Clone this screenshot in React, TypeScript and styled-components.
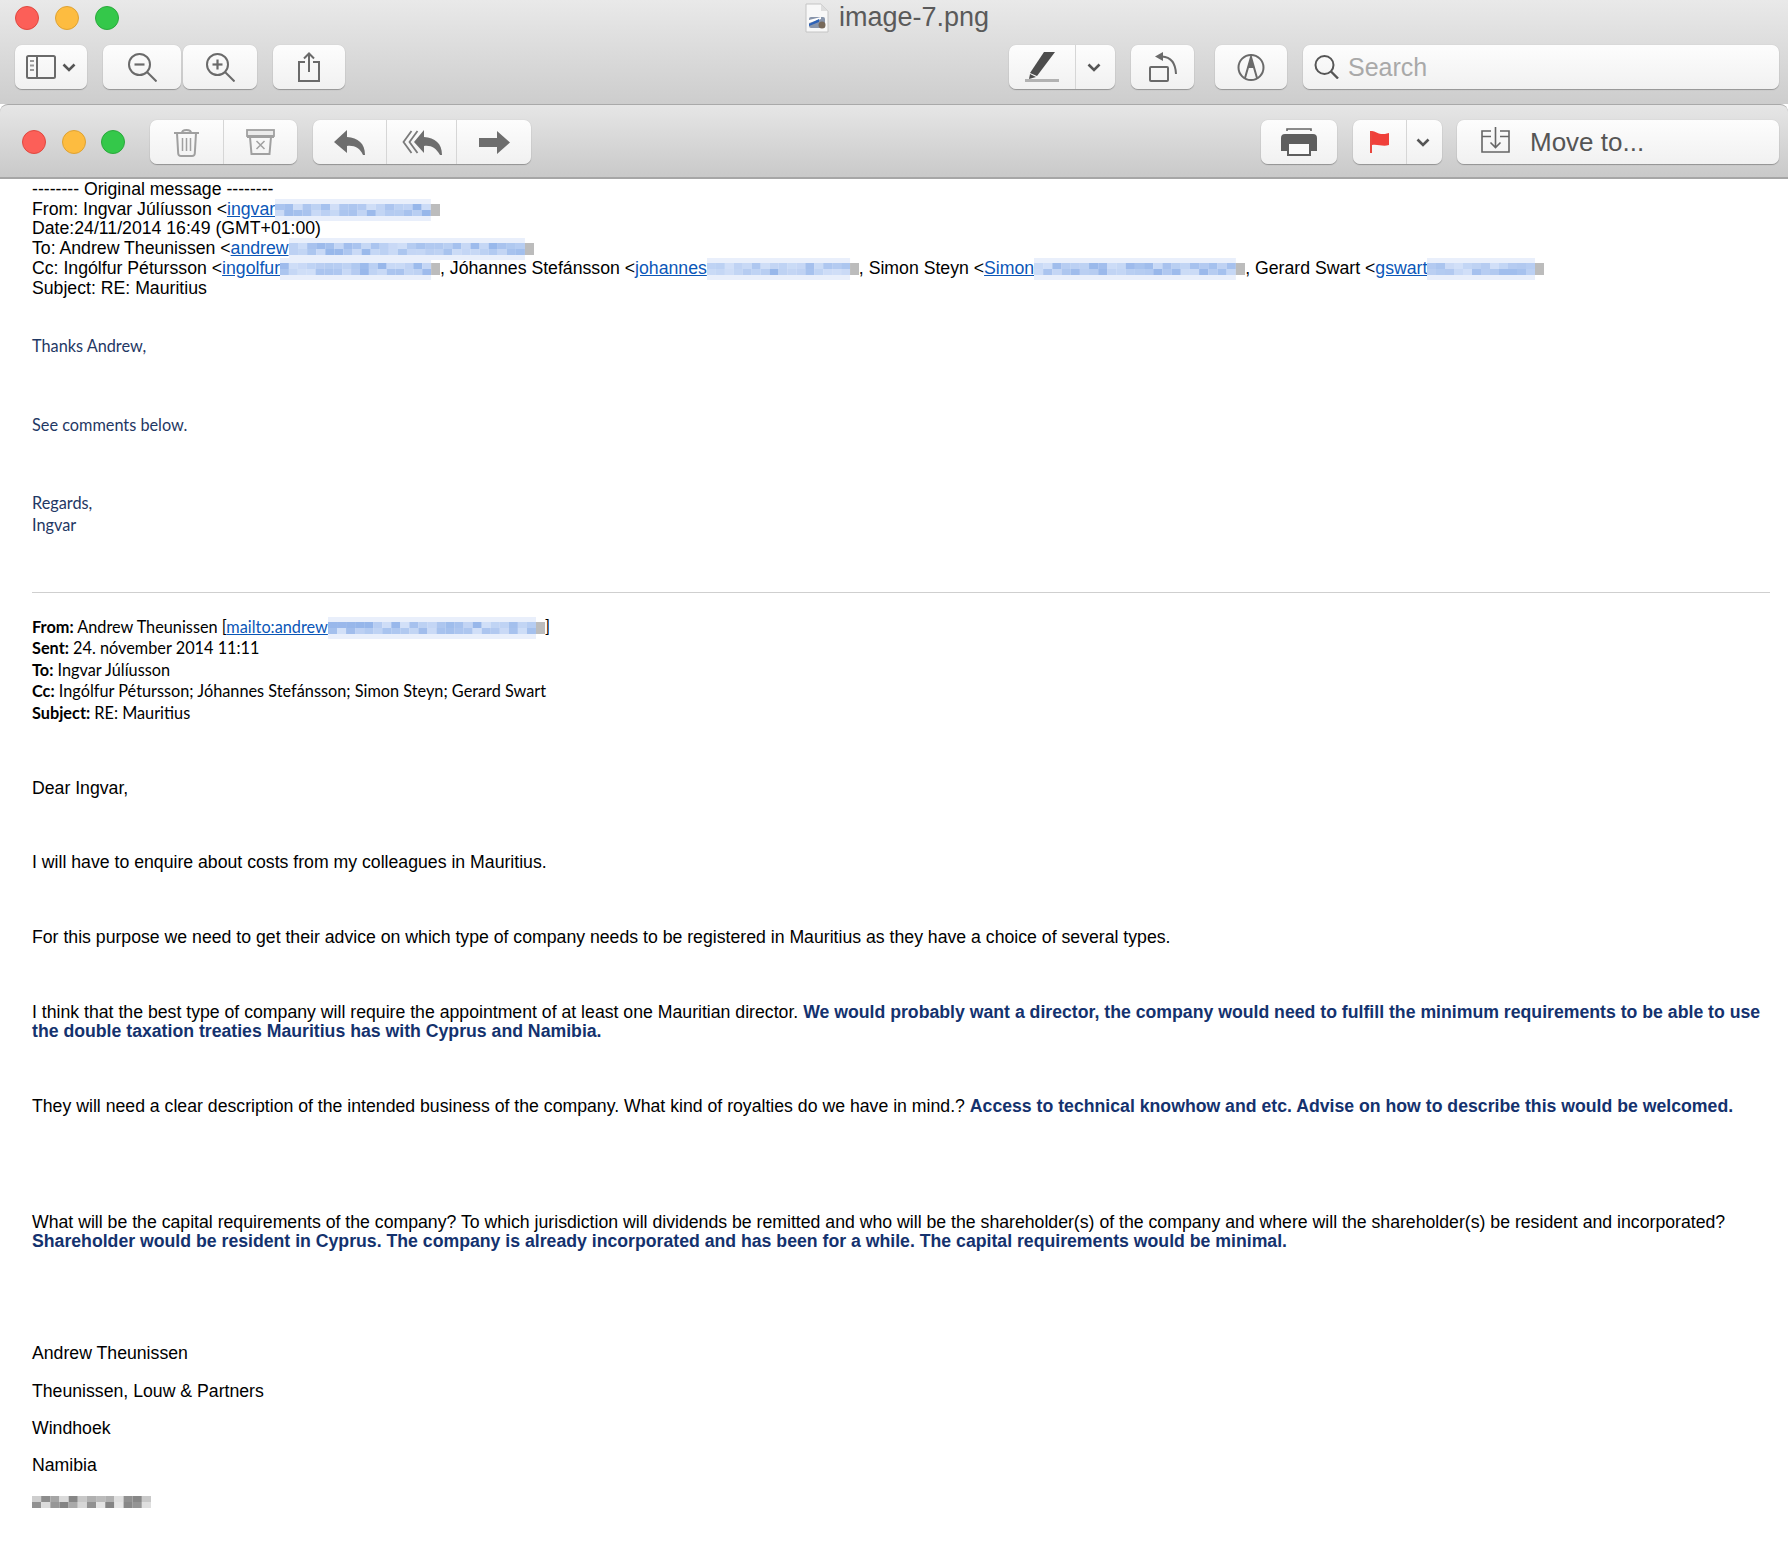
import React from 'react';
import styled, { createGlobalStyle } from 'styled-components';

const GlobalStyle = createGlobalStyle`
  html, body {
    margin: 0;
    padding: 0;
    background: #fff;
  }
`;

const Page = styled.div`
  width: 1788px;
  min-height: 1566px;
  background: #fff;
  overflow: hidden;
`;

// Preview window chrome
const PreviewBar = styled.header`
  height: 104px;
  box-sizing: border-box;
  background: linear-gradient(#e9e9e9, #cdcdcd);
  padding: 2px 9px 0 15px;
`;

const TitleRow = styled.div`
  display: grid;
  grid-template-columns: 1fr auto 1fr;
  align-items: center;
  height: 30px;
`;

const Lights = styled.div<{ $gap: number }>`
  display: flex;
  gap: ${p => p.$gap}px;
`;

const Light = styled.span<{ $color: string; $edge: string }>`
  width: 24px;
  height: 24px;
  border-radius: 50%;
  box-sizing: border-box;
  background: ${p => p.$color};
  border: 1px solid ${p => p.$edge};
`;

const Title = styled.div`
  display: flex;
  align-items: center;
  gap: 10px;
  font: 27px "Liberation Sans", Arial, sans-serif;
  color: #5a5a5a;
`;

const ToolRow = styled.div`
  display: flex;
  align-items: flex-start;
  margin-top: 13px;
`;

const Spacer = styled.div`
  flex: 1;
`;

const Btn = styled.div<{ $w: number; $ml?: number }>`
  width: ${p => p.$w}px;
  height: 44px;
  margin-left: ${p => p.$ml ?? 0}px;
  flex: none;
  box-sizing: border-box;
  display: flex;
  align-items: center;
  justify-content: center;
  gap: 6px;
  border-radius: 7px;
  background: linear-gradient(#fdfdfd, #f1f1f1);
  box-shadow: 0 1px 1px rgba(0, 0, 0, 0.28), 0 0 1px rgba(0, 0, 0, 0.18);
`;

const Group = styled(Btn)`
  justify-content: flex-start;
  gap: 0;
`;

const Seg = styled.div<{ $w: number; $line?: boolean }>`
  width: ${p => p.$w}px;
  height: 100%;
  box-sizing: border-box;
  display: flex;
  align-items: center;
  justify-content: center;
  border-right: ${p => (p.$line ? '1px solid #d6d6d6' : 'none')};
`;

const ArrowSeg = styled(Seg)`
  padding-right: 3px;
`;

const SearchBox = styled(Btn)`
  justify-content: flex-start;
  padding-left: 11px;
  gap: 9px;
  font: 25px "Liberation Sans", Arial, sans-serif;
  color: #a9a9a9;
`;

const MoveBox = styled(Btn)`
  justify-content: flex-start;
  padding-left: 24px;
  gap: 20px;
  font: 26px "Liberation Sans", Arial, sans-serif;
  color: #555;

  svg {
    margin-top: -4px;
  }
`;

// Mail window chrome
const MailBar = styled.div`
  height: 75px;
  box-sizing: border-box;
  display: flex;
  align-items: flex-start;
  padding: 15px 9px 0 22px;
  background: linear-gradient(#e6e6e6, #c9c9c9);
  border-top: 1px solid #a9a9a9;
  border-bottom: 2px solid #a6a6a6;
  border-radius: 8px 8px 0 0;
`;

const MailLights = styled(Lights)`
  height: 44px;
  align-items: center;
  width: 128px;
`;

// Message body
const Message = styled.main`
  padding: 1px 18px 0 32px;
  color: #000;
`;

const Arial = styled.div<{ $mt?: number }>`
  font: 17.68px/19.7px "Liberation Sans", Arial, sans-serif;
  margin-top: ${p => p.$mt ?? 0}px;
  white-space: nowrap;
`;

const Calibri = styled.div<{ $mt?: number; $navy?: boolean }>`
  font: 16.3px/21.6px Lato, "Open Sans", sans-serif;
  margin-top: ${p => p.$mt ?? 0}px;
  color: ${p => (p.$navy ? '#1f3864' : '#000')};
  white-space: nowrap;
`;

const Link = styled.span`
  color: #0b57b8;
  text-decoration: underline;
`;

const Reply = styled.strong`
  color: #14326e;
`;

const Rule = styled.hr`
  border: none;
  border-top: 1px solid #cfcfcf;
  margin: 56px 0 0;
`;

const Pixels = styled.svg<{ $w: number }>`
  display: inline-block;
  width: ${p => p.$w}px;
  height: 22px;
  margin: -4px 0;
  vertical-align: middle;
`;

const CELL = 9;

// pixelated block over the hidden part of an address
const Redact: React.FC<{ w: number; gray?: boolean; seed: number }> = ({ w, gray, seed }) => {
  const cols = Math.round(w / CELL);
  const cells: React.ReactNode[] = [];
  let s = seed;
  for (let y = 0; y < 2; y++) {
    for (let x = 0; x < cols; x++) {
      s = (s * 9301 + 49297) % 233280;
      const v = s / 233280;
      let fill = `rgb(${150 + v * 60},${182 + v * 42},${234 + v * 14})`;
      if (gray) fill = `rgb(${130 + v * 100},${130 + v * 100},${130 + v * 100})`;
      else if (x === cols - 1) fill = '#bcbcbc';
      cells.push(<rect key={`${x}-${y}`} x={x * CELL} y={5 + y * 6} width={CELL} height={6} fill={fill} />);
    }
  }
  return (
    <Pixels $w={w} viewBox={`0 0 ${cols * CELL} 22`} preserveAspectRatio="none">
      {!gray && <rect x={0} y={0} width={(cols - 1) * CELL} height={22} fill="#e9effb" />}
      {cells}
    </Pixels>
  );
};

const Ic = { fill: 'none', stroke: '#6a6a6a', strokeWidth: 2 };

const Chevron = () => (
  <svg width="14" height="9" viewBox="0 0 14 9" fill="none" stroke="#555" strokeWidth="2.6">
    <path d="M1.5 1.5L7 7l5.5-5.5" />
  </svg>
);

const SidebarIcon = () => (
  <svg width="30" height="24" viewBox="0 0 30 24" {...Ic}>
    <rect x="1" y="1" width="28" height="22" rx="1.5" />
    <path d="M11 1v22" />
    <path d="M4 6h4M4 10.5h4M4 15h4" stroke="#999" />
  </svg>
);

const ZoomIcon: React.FC<{ plus?: boolean }> = ({ plus }) => (
  <svg width="29" height="29" viewBox="0 0 29 29" {...Ic}>
    <circle cx="11.5" cy="11.5" r="10.5" />
    <path d="M19 19l9.5 9.5" />
    <path d="M6.5 11.5h10" strokeWidth="2.2" />
    {plus && <path d="M11.5 6.5v10" strokeWidth="2.2" />}
  </svg>
);

const ShareIcon = () => (
  <svg width="22" height="30" viewBox="0 0 22 30" {...Ic}>
    <path d="M7 10H1v19h20V10h-6" />
    <path d="M11 20V1.5M6 6.5l5-5 5 5" />
  </svg>
);

const PenIcon = () => (
  <svg width="34" height="30" viewBox="0 0 34 30">
    <path d="M19 0h11L12 24l-7-3z" fill="#4d4d4d" />
    <path d="M5 22l6 3-7 2z" fill="#4d4d4d" />
    <rect x="0" y="27" width="34" height="3" fill="#b2b2b2" />
  </svg>
);

const RotateIcon = () => (
  <svg width="28" height="30" viewBox="0 0 28 30" fill="none" stroke="#6a6a6a" strokeWidth="2">
    <rect x="1" y="15" width="18" height="14" rx="1" />
    <path d="M13 4.5C22 5 26.5 11 27 22" />
    <path d="M14 0L6 4.5 14 9z" fill="#6a6a6a" stroke="none" />
  </svg>
);

const MarkupIcon = () => (
  <svg width="28" height="27" viewBox="0 0 28 27" fill="none" stroke="#6a6a6a" strokeWidth="2">
    <circle cx="14" cy="13.5" r="12.5" />
    <path d="M8 24l6-21 6 21" />
    <path d="M14 3l3.5 11h-7z" fill="#6a6a6a" stroke="none" />
  </svg>
);

const SearchIcon = () => (
  <svg width="25" height="24" viewBox="0 0 25 24" fill="none" stroke="#555" strokeWidth="2">
    <circle cx="10.5" cy="10" r="9" />
    <path d="M17 16.5l7 7" strokeWidth="2.4" />
  </svg>
);

const TrashIcon = () => (
  <svg width="25" height="29" viewBox="0 0 25 29" fill="none" stroke="#a0a0a0" strokeWidth="2">
    <path d="M0 5h25M8 5c0-4 9-4 9 0" />
    <path d="M3 5l1.2 20.5q.2 2.5 2.8 2.5h11q2.6 0 2.8-2.5L22 5" />
    <path d="M8.5 10v13M12.5 10v13M16.5 10v13" strokeWidth="1.5" />
  </svg>
);

const ArchiveIcon = () => (
  <svg width="29" height="26" viewBox="0 0 29 26" fill="none" stroke="#a0a0a0" strokeWidth="2">
    <rect x="1" y="1" width="27" height="6" fill="#ebebeb" strokeWidth="1.8" />
    <path d="M1 7.5h27" strokeWidth="3" />
    <path d="M4 8l1.5 17h18L25 8" />
    <path d="M10.5 12l8 8M18.5 12l-8 8" strokeWidth="1.5" />
  </svg>
);

const ReplyIcon = () => (
  <svg width="31" height="25" viewBox="0 0 31 25" fill="#6e6e6e">
    <path d="M13 0L0 12l13 11v-7c7-1 13 2 16 9h2c0-12-7-17-18-18z" />
  </svg>
);

const ReplyAllIcon = () => (
  <svg width="40" height="25" viewBox="0 0 40 25" fill="none">
    <path d="M9.5 1L1.5 12l8 11M15.5 1L7.5 12l8 11" stroke="#7a7a7a" strokeWidth="1.8" />
    <path d="M22 0L12 12l10 11v-7c7-1 12 2 16 9h2c0-12-7-17-18-18z" fill="#6e6e6e" />
  </svg>
);

const ForwardIcon = () => (
  <svg width="31" height="23" viewBox="0 0 31 23" fill="#6e6e6e">
    <path d="M0 7h18V0l13 11.5L18 23v-7H0z" />
  </svg>
);

const PrintIcon = () => (
  <svg width="36" height="28" viewBox="0 0 36 28">
    <path d="M6 3V1h24v2" fill="none" stroke="#666" strokeWidth="1.6" />
    <path d="M4 6h28a4 4 0 0 1 4 4v13h-6v-8H6v8H0V10a4 4 0 0 1 4-4z" fill="#5e5e5e" />
    <rect x="7" y="15" width="22" height="12" fill="#fafafa" stroke="#5e5e5e" strokeWidth="2" />
  </svg>
);

const FlagIcon = () => (
  <svg width="19" height="22" viewBox="0 0 19 22">
    <path d="M1 0v22" stroke="#e8342a" strokeWidth="1.8" />
    <path d="M2 0c3 0 6 3 9 3 3 0 5 0 8-1v12c-6 2-11-1-17 0z" fill="#f0403a" />
  </svg>
);

const MoveIcon = () => (
  <svg width="29" height="26" viewBox="0 0 29 26" fill="none" stroke="#666" strokeWidth="1.6">
    <path d="M10 4H1v21h27V4h-9" />
    <path d="M1 9.5h9M19 9.5h9" strokeWidth="1.3" />
    <path d="M14.5 0v20M9.5 15.5l5 5 5-5" />
  </svg>
);

const FileIcon = () => (
  <svg width="24" height="30" viewBox="0 0 24 30">
    <path d="M1 1h15l7 7v21H1z" fill="#f8f8f8" stroke="#c4c4c4" />
    <path d="M16 1v7h7z" fill="#dedede" />
    <rect x="4" y="14" width="16" height="11" rx="2" fill="#8794aa" />
    <path d="M4 17l12-3v2L4 20z" fill="#fff" />
    <path d="M4 21l10-5v3l-10 4z" fill="#2c62b8" />
    <circle cx="17" cy="22" r="3.5" fill="#77695a" />
  </svg>
);

const TrafficLights = () => (
  <>
    <Light $color="#fc5f58" $edge="#e0483f" />
    <Light $color="#fdbc40" $edge="#dea233" />
    <Light $color="#34c84a" $edge="#2aa93c" />
  </>
);

const App: React.FC = () => (
  <Page>
    <GlobalStyle />
    <PreviewBar>
      <TitleRow>
        <Lights $gap={16}>
          <TrafficLights />
        </Lights>
        <Title>
          <FileIcon />
          image-7.png
        </Title>
      </TitleRow>
      <ToolRow>
        <Btn $w={72}>
          <SidebarIcon />
          <Chevron />
        </Btn>
        <Btn $w={78} $ml={16}><ZoomIcon /></Btn>
        <Btn $w={74} $ml={2}><ZoomIcon plus /></Btn>
        <Btn $w={72} $ml={16}><ShareIcon /></Btn>
        <Spacer />
        <Group $w={106}>
          <Seg $w={67} $line><PenIcon /></Seg>
          <ArrowSeg $w={39}><Chevron /></ArrowSeg>
        </Group>
        <Btn $w={63} $ml={16}><RotateIcon /></Btn>
        <Btn $w={72} $ml={21}><MarkupIcon /></Btn>
        <SearchBox $w={476} $ml={16}>
          <SearchIcon />
          Search
        </SearchBox>
      </ToolRow>
    </PreviewBar>
    <MailBar>
      <MailLights $gap={15.5}>
        <TrafficLights />
      </MailLights>
      <Group $w={147}>
        <Seg $w={74} $line><TrashIcon /></Seg>
        <Seg $w={73}><ArchiveIcon /></Seg>
      </Group>
      <Group $w={218} $ml={16}>
        <Seg $w={74} $line><ReplyIcon /></Seg>
        <Seg $w={70} $line><ReplyAllIcon /></Seg>
        <Seg $w={74}><ForwardIcon /></Seg>
      </Group>
      <Spacer />
      <Btn $w={76}><PrintIcon /></Btn>
      <Group $w={89} $ml={16}>
        <Seg $w={54} $line><FlagIcon /></Seg>
        <ArrowSeg $w={35}><Chevron /></ArrowSeg>
      </Group>
      <MoveBox $w={322} $ml={15}>
        <MoveIcon />
        Move to...
      </MoveBox>
    </MailBar>
    <Message>
      <Arial>-------- Original message --------</Arial>
      <Arial>From: Ingvar Júlíusson &lt;<Link>ingvar</Link><Redact w={165} seed={3} /></Arial>
      <Arial>Date:24/11/2014 16:49 (GMT+01:00)</Arial>
      <Arial>To: Andrew Theunissen &lt;<Link>andrew</Link><Redact w={245} seed={11} /></Arial>
      <Arial>
        Cc: Ingólfur Pétursson &lt;<Link>ingolfur</Link><Redact w={160} seed={23} />, Jóhannes Stefánsson &lt;<Link>johannes</Link>
        <Redact w={152} seed={37} />, Simon Steyn &lt;<Link>Simon</Link><Redact w={211} seed={41} />, Gerard Swart &lt;<Link>gswart</Link>
        <Redact w={117} seed={57} />
      </Arial>
      <Arial>Subject: RE: Mauritius</Arial>

      <Calibri $navy $mt={37}>Thanks Andrew,</Calibri>
      <Calibri $navy $mt={57}>See comments below.</Calibri>
      <Calibri $navy $mt={57}>Regards,</Calibri>
      <Calibri $navy>Ingvar</Calibri>

      <Rule />

      <Calibri $mt={23}><b>From:</b> Andrew Theunissen [<Link>mailto:andrew</Link><Redact w={217} seed={71} />]</Calibri>
      <Calibri><b>Sent:</b> 24. nóvember 2014 11:11</Calibri>
      <Calibri><b>To:</b> Ingvar Júlíusson</Calibri>
      <Calibri><b>Cc:</b> Ingólfur Pétursson; Jóhannes Stefánsson; Simon Steyn; Gerard Swart</Calibri>
      <Calibri><b>Subject:</b> RE: Mauritius</Calibri>

      <Arial $mt={55}>Dear Ingvar,</Arial>
      <Arial $mt={55}>I will have to enquire about costs from my colleagues in Mauritius.</Arial>
      <Arial $mt={55}>For this purpose we need to get their advice on which type of company needs to be registered in Mauritius as they have a choice of several types.</Arial>
      <Arial $mt={55}>
        I think that the best type of company will require the appointment of at least one Mauritian director.{' '}
        <Reply>We would probably want a director, the company would need to fulfill the minimum requirements to be able to use</Reply>
      </Arial>
      <Arial><Reply>the double taxation treaties Mauritius has with Cyprus and Namibia.</Reply></Arial>
      <Arial $mt={55}>
        They will need a clear description of the intended business of the company. What kind of royalties do we have in mind.?{' '}
        <Reply>Access to technical knowhow and etc. Advise on how to describe this would be welcomed.</Reply>
      </Arial>
      <Arial $mt={96}>What will be the capital requirements of the company? To which jurisdiction will dividends be remitted and who will be the shareholder(s) of the company and where will the shareholder(s) be resident and incorporated?</Arial>
      <Arial><Reply>Shareholder would be resident in Cyprus. The company is already incorporated and has been for a while. The capital requirements would be minimal.</Reply></Arial>

      <Arial $mt={92}>Andrew Theunissen</Arial>
      <Arial $mt={18}>Theunissen, Louw &amp; Partners</Arial>
      <Arial $mt={17}>Windhoek</Arial>
      <Arial $mt={18}>Namibia</Arial>
      <Arial $mt={16}><Redact w={119} gray seed={89} /></Arial>
    </Message>
  </Page>
);

export default App;
